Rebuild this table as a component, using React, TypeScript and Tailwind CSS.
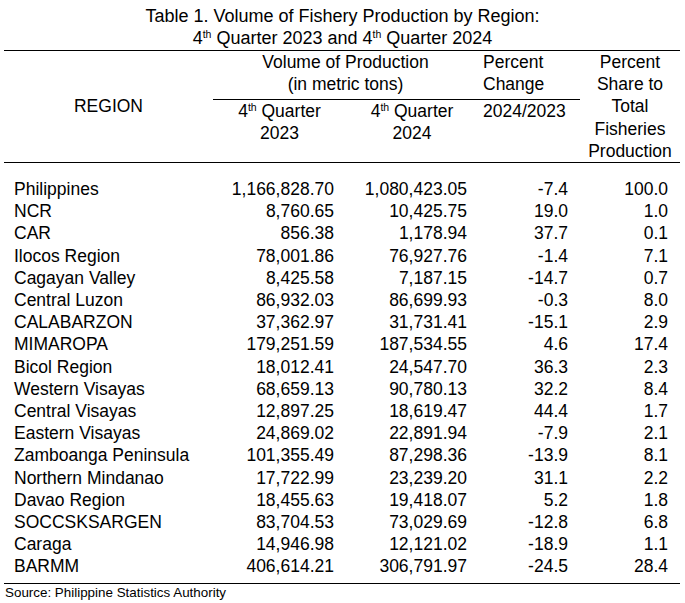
import React from "react";

const rows = [
  ["Philippines", "1,166,828.70", "1,080,423.05", "-7.4", "100.0"],
  ["NCR", "8,760.65", "10,425.75", "19.0", "1.0"],
  ["CAR", "856.38", "1,178.94", "37.7", "0.1"],
  ["Ilocos Region", "78,001.86", "76,927.76", "-1.4", "7.1"],
  ["Cagayan Valley", "8,425.58", "7,187.15", "-14.7", "0.7"],
  ["Central Luzon", "86,932.03", "86,699.93", "-0.3", "8.0"],
  ["CALABARZON", "37,362.97", "31,731.41", "-15.1", "2.9"],
  ["MIMAROPA", "179,251.59", "187,534.55", "4.6", "17.4"],
  ["Bicol Region", "18,012.41", "24,547.70", "36.3", "2.3"],
  ["Western Visayas", "68,659.13", "90,780.13", "32.2", "8.4"],
  ["Central Visayas", "12,897.25", "18,619.47", "44.4", "1.7"],
  ["Eastern Visayas", "24,869.02", "22,891.94", "-7.9", "2.1"],
  ["Zamboanga Peninsula", "101,355.49", "87,298.36", "-13.9", "8.1"],
  ["Northern Mindanao", "17,722.99", "23,239.20", "31.1", "2.2"],
  ["Davao Region", "18,455.63", "19,418.07", "5.2", "1.8"],
  ["SOCCSKSARGEN", "83,704.53", "73,029.69", "-12.8", "6.8"],
  ["Caraga", "14,946.98", "12,121.02", "-18.9", "1.1"],
  ["BARMM", "406,614.21", "306,791.97", "-24.5", "28.4"],
];

const cols = "grid grid-cols-[209px_133px_132px_102px_100px]";

// superscript "th" as in the printed table
function Th() {
  return <sup className="text-[10.5px] leading-none top-[-6px]">th</sup>;
}

export default function App() {
  return (
    <div
      className="w-[685px] h-[603px] bg-white text-black text-[17.5px] leading-[22.2px] overflow-hidden"
      style={{ fontFamily: '"Liberation Sans", Arial, sans-serif' }}
    >
      {/* title */}
      <div className="pt-[6px] text-center text-[18px] leading-[21.5px]">
        <p>Table 1. Volume of Fishery Production by Region:</p>
        <p>
          4<Th /> Quarter 2023 and 4<Th /> Quarter 2024
        </p>
      </div>

      <div className="ml-[4px] w-[676px] mt-[1px]">
        {/* header */}
        <div className={`${cols} grid-rows-[49px_auto] border-t-[1.5px] border-b-[1.5px] border-black`}>
          <div className="row-span-2 flex items-center justify-center">REGION</div>
          <div className="col-span-2 text-center border-b border-black">
            <p>Volume of Production</p>
            <p>(in metric tons)</p>
          </div>
          <div className="pl-[5px] border-b border-black">
            <p>Percent</p>
            <p>Change</p>
          </div>
          <div className="row-span-2 text-center">
            <p>Percent</p>
            <p>Share to</p>
            <p>Total</p>
            <p>Fisheries</p>
            <p>Production</p>
          </div>
          <div className="text-center">
            <p>
              4<Th /> Quarter
            </p>
            <p>2023</p>
          </div>
          <div className="text-center">
            <p>
              4<Th /> Quarter
            </p>
            <p>2024</p>
          </div>
          <div className="pl-[5px]">2024/2023</div>
        </div>

        {/* body */}
        <div className="pt-[15px] pb-[5px] border-b-[1.5px] border-black">
          {rows.map((r) => (
            <div key={r[0]} className={cols}>
              <div className="pl-[10px] whitespace-nowrap">{r[0]}</div>
              <div className="text-right pr-[12px]">{r[1]}</div>
              <div className="text-right pr-[11px]">{r[2]}</div>
              <div className="text-right pr-[12px]">{r[3]}</div>
              <div className="text-right pr-[12px]">{r[4]}</div>
            </div>
          ))}
        </div>
        <p className="pl-[1px] text-[13.4px] leading-[18px]">Source: Philippine Statistics Authority</p>
      </div>
    </div>
  );
}
